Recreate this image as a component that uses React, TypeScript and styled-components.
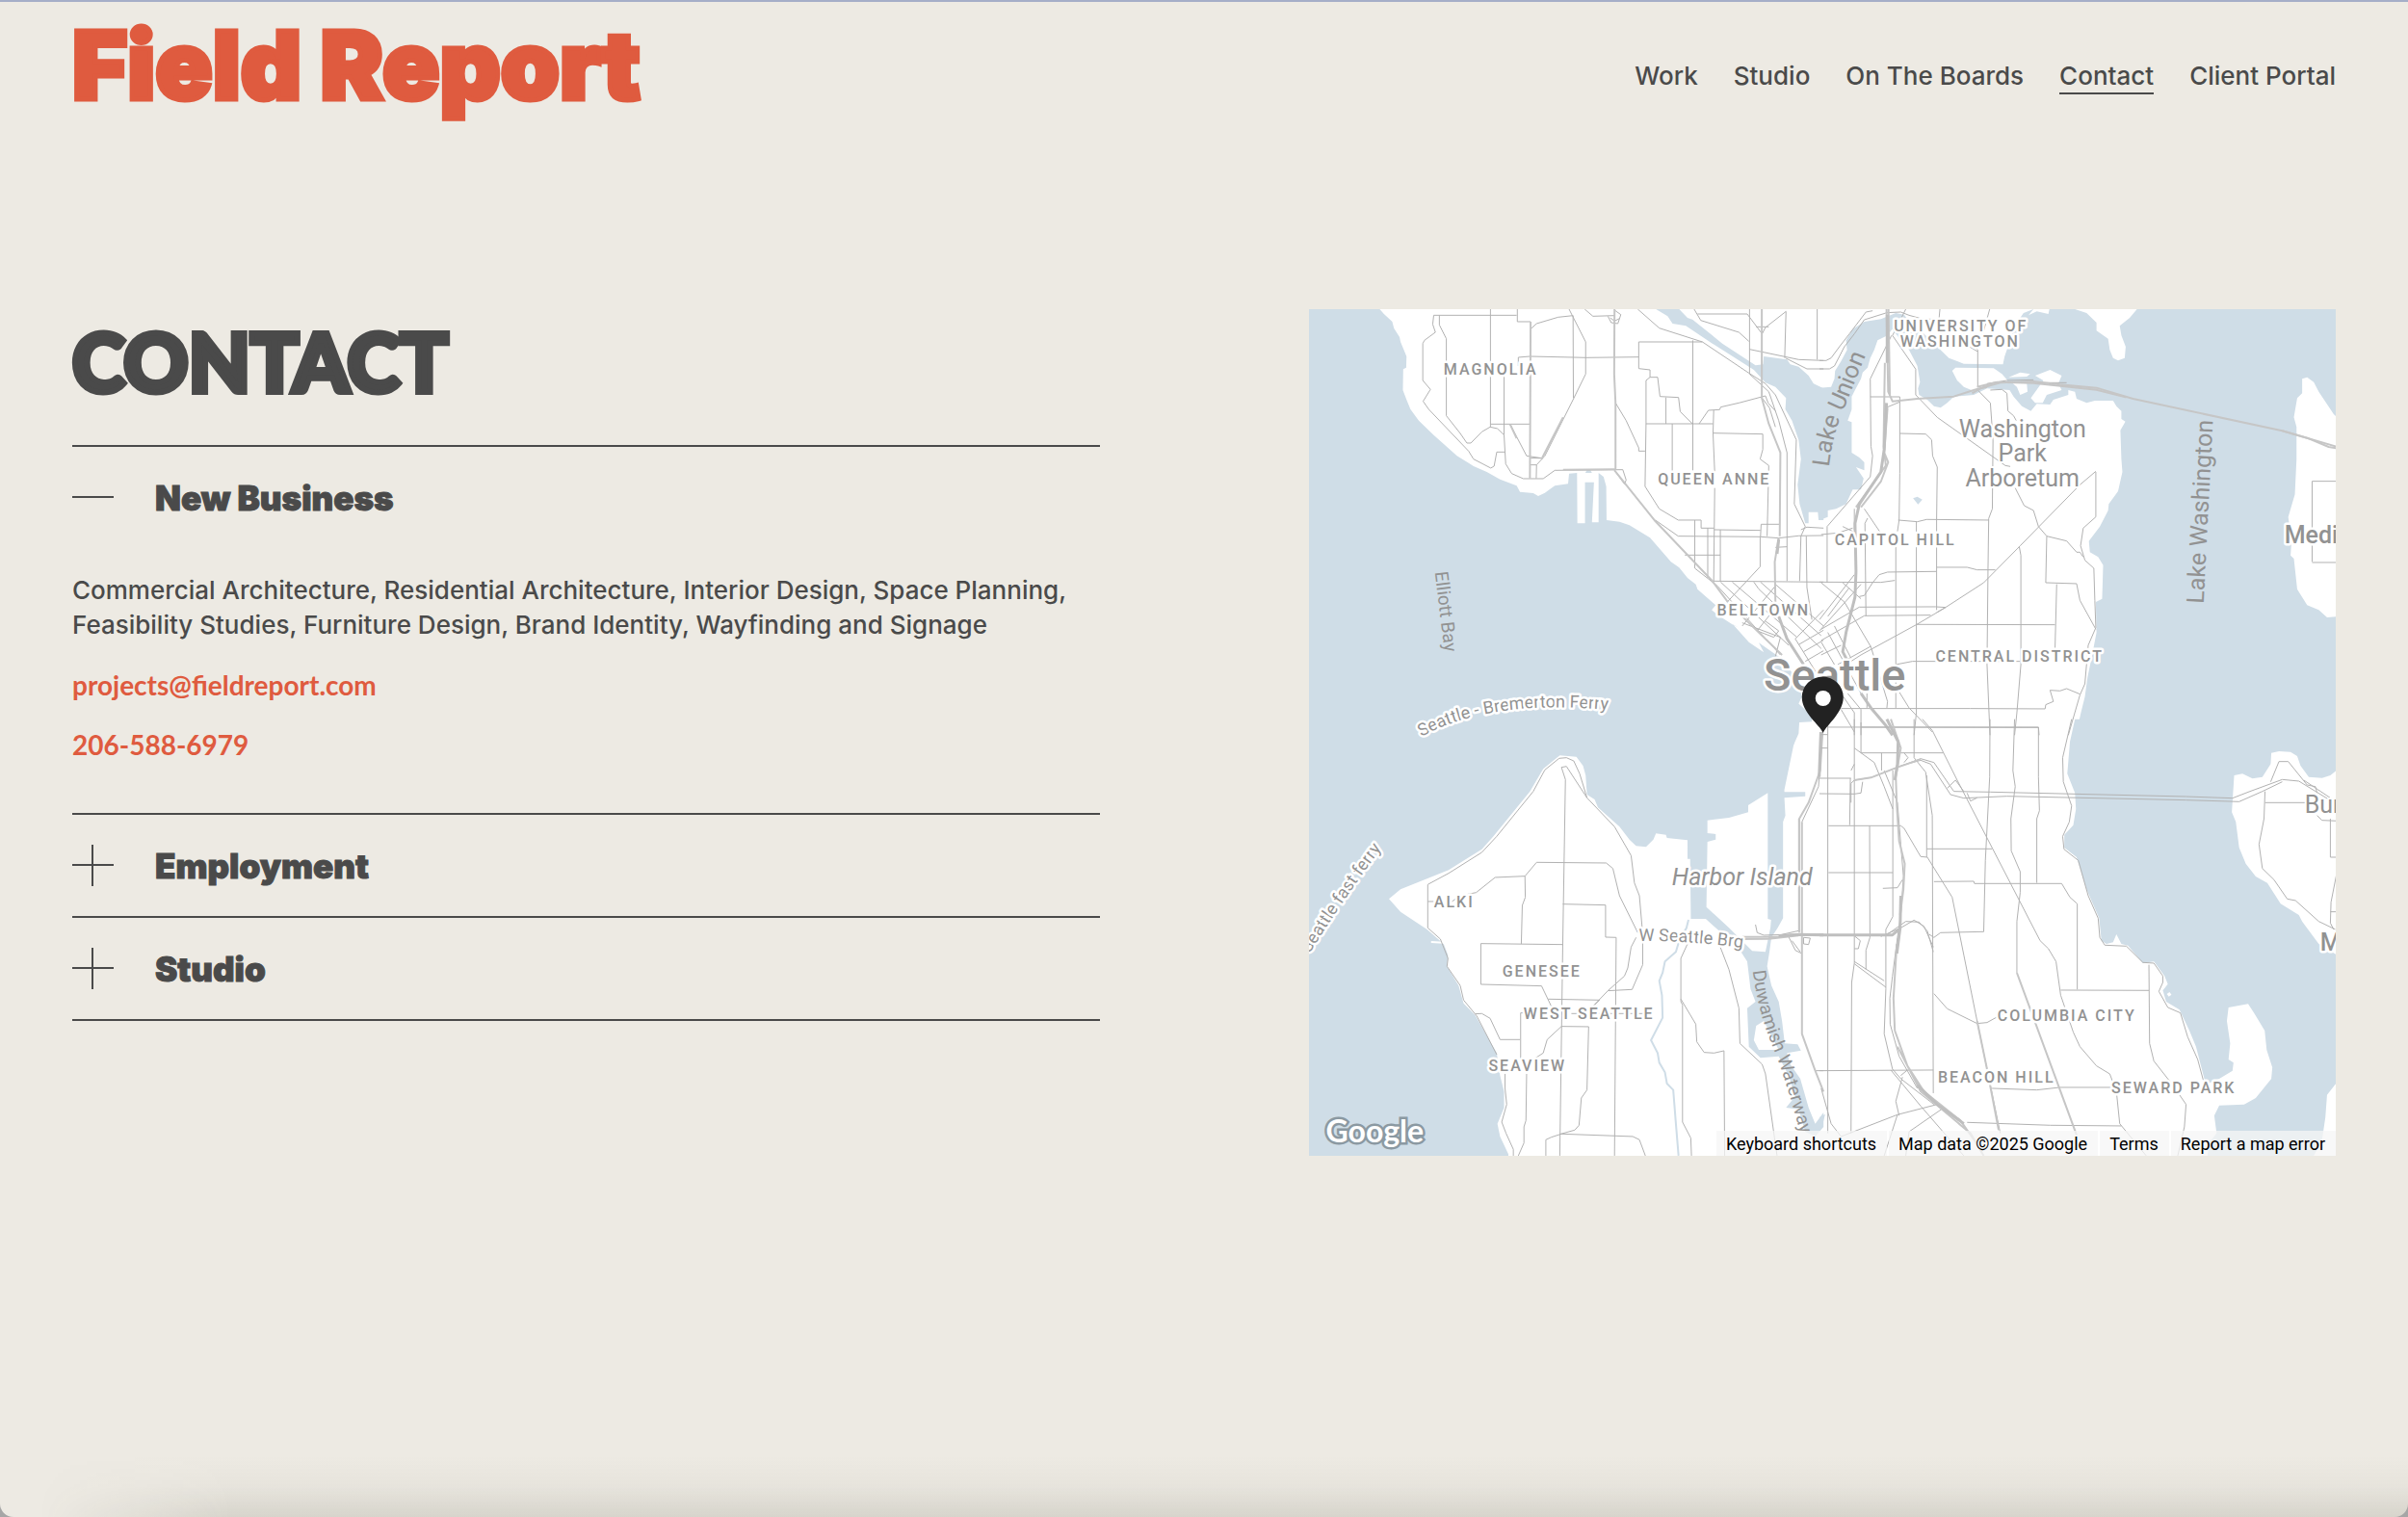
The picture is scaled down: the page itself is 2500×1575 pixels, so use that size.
import React, { useState } from "react";
import styled, { createGlobalStyle } from "styled-components";

const ink = "#4a4a4a";
const accent = "#df5b3f";
const paper = "#edeae3";

const GlobalStyle = createGlobalStyle`
  *, *::before, *::after { box-sizing: border-box; }
  body { margin: 0; background: #a6a6a6; color: ${ink}; font-family: Inter, "Liberation Sans", sans-serif; }
`;

const Page = styled.div`
  position: relative;
  min-height: 100vh;
  overflow: hidden;
  background: ${paper};
  border-top: 2px solid #a5aec8;
  border-radius: 0 0 14px 14px;

  &::after {
    content: "";
    position: absolute;
    inset: auto 0 0 0;
    height: 64px;
    pointer-events: none;
    background: linear-gradient(to top, rgba(60, 60, 40, 0.12), rgba(60, 60, 40, 0.03) 50%, transparent);
    mask-image: linear-gradient(to right, transparent 40px, #000 240px);
  }
`;

const Header = styled.header`
  display: flex;
  justify-content: space-between;
  align-items: flex-start;
  padding: 0 75px;
`;

const Logo = styled.a`
  color: ${accent};
  font: 900 98px/132px Inter, "Liberation Sans", sans-serif;
  -webkit-text-stroke: 5px ${accent};
  text-decoration: none;
  white-space: nowrap;
`;

const Nav = styled.nav`
  display: flex;
  gap: 37px;
  padding-top: 60px;
`;

const NavLink = styled.a<{ $active?: boolean }>`
  border-bottom: 2px solid ${(p) => (p.$active ? ink : "transparent")};
  color: ${ink};
  font-size: 26px;
  font-weight: 500;
  line-height: 34px;
  text-decoration: none;
  white-space: nowrap;
`;

const Main = styled.main`
  display: grid;
  grid-template-columns: minmax(0, 1fr) minmax(0, 1fr);
  gap: 217px;
  align-items: start;
  padding: 187px 75px 120px;
`;

const Title = styled.h1`
  margin: 0 0 33px;
  font: 900 83px/108px Lato, "Liberation Sans", sans-serif;
  -webkit-text-stroke: 6px ${ink};
  text-transform: uppercase;
`;

const Accordion = styled.div`
  border-bottom: 2px solid ${ink};
`;

const Item = styled.section`
  border-top: 2px solid ${ink};
`;

const ItemHeading = styled.h2`
  margin: 0;
`;

const Toggle = styled.button`
  display: flex;
  align-items: center;
  gap: 43px;
  width: 100%;
  height: 105px;
  padding: 0;
  border: 0;
  background: none;
  color: ${ink};
  cursor: pointer;
  text-align: left;
`;

const ToggleLabel = styled.span`
  font: 900 35px/48px Inter, "Liberation Sans", sans-serif;
  -webkit-text-stroke: 1px ${ink};
`;

const Panel = styled.div`
  display: flex;
  flex-direction: column;
  align-items: flex-start;
  gap: 26px;
  padding: 26px 0 53px;
`;

const Copy = styled.p`
  margin: 0;
  font-size: 26px;
  font-weight: 500;
  line-height: 36px;
`;

const ContactLink = styled.a`
  color: ${accent};
  font: 700 28px/36px Lato, "Liberation Sans", sans-serif;
  text-decoration: none;
`;

const MapFrame = styled.section`
  position: relative;
  height: 879px;
  overflow: hidden;
  background: #fff;
`;

const MapCanvas = styled.svg`
  display: block;
  width: 100%;
  height: 100%;
`;

const Water = styled.path`
  fill: #cfdde7;
`;

const Land = styled.path`
  fill: #fff;
`;

const Stream = styled.path`
  fill: none;
  stroke: #cfdde7;
  stroke-width: 2;
  vector-effect: non-scaling-stroke;
`;

const Road = styled.path<{ $w: number }>`
  fill: none;
  stroke: ${(p) => (p.$w === 2 ? "#c6c6c6" : p.$w > 2 ? "#bfbfbf" : "#b2b2b2")};
  stroke-width: ${(p) => p.$w};
  stroke-linejoin: round;
  vector-effect: non-scaling-stroke;
`;

type Kind = "district" | "place" | "town" | "city" | "water" | "ferry" | "island";

const kinds: Record<Kind, string> = {
  district: "font-size: 16px; font-weight: 500; letter-spacing: 2px;",
  place: "font-size: 25px; stroke-width: 4px;",
  town: "font-size: 25px; font-weight: 500;",
  city: "font-size: 47px; font-weight: 500;",
  water: "font-size: 25px; stroke: none;",
  ferry: "font-size: 18px;",
  island: "font-size: 25px; font-style: italic;",
};

const Label = styled.text<{ $kind: Kind; $small?: boolean }>`
  fill: #929292;
  stroke: #fff;
  stroke-width: 5px;
  stroke-linejoin: round;
  paint-order: stroke;
  font-family: Roboto, "Liberation Sans", sans-serif;
  ${(p) => kinds[p.$kind]}
  ${(p) => p.$small && "font-size: 19px;"}
`;

const GoogleLink = styled.a`
  position: absolute;
  left: 18px;
  bottom: 6px;
  color: #fff;
  font: 700 32px/40px Lato, "Liberation Sans", sans-serif;
  -webkit-text-stroke: 5px #8b99a2;
  paint-order: stroke fill;
  text-decoration: none;
`;

const Attribution = styled.div`
  position: absolute;
  right: 0;
  bottom: 0;
  display: flex;
  gap: 2px;
`;

const attributionCell = `
  height: 26px;
  padding: 1px 11px 0 10px;
  border: 0;
  background: rgba(245, 245, 245, 0.75);
  color: #000;
  font: 400 18px/25px Roboto, "Liberation Sans", sans-serif;
  text-decoration: none;
  white-space: nowrap;
`;

const AttributionButton = styled.button`${attributionCell}`;
const AttributionText = styled.span`${attributionCell}`;
const AttributionLink = styled.a`${attributionCell}`;

type Tile = { at: string; water: string[]; land: string[]; streams: string[]; roads: string[]; arterials: string[]; freeways: string[] };

const tiles: Tile[] = [
  {
    at: "translate(-8 -11) scale(0.3444 0.3333)",
    water: [
      "M0,33 237,33 250,48 275,72 280,92 297,120 300,135 318,180 317,215 308,220 307,285 318,315 330,345 355,380 400,425 470,490 520,522 560,540 600,563 650,583 660,602 700,606 715,615 735,605 765,583 805,577 808,545 832,543 833,700 856,700 856,572 883,572 877,697 897,697 897,543 912,555 920,585 921,690 960,695 990,706 1052,745 1115,820 1140,838 1165,870 1190,890 1195,905 1250,955 1238,970 1255,985 1300,1015 1320,1025 1302,1015 1350,1070 1395,1102 1380,1072 1440,1115 1468,1145 1500,1200 1510,1240 1500,1262 1540,1300 1540,1318 1502,1320 1500,1355 1485,1390 0,1390Z",
      "M1070,33 1140,33 1165,60 1180,65 1270,140 1370,208 1393,205 1395,180 1465,190 1475,205 1500,212 1530,240 1545,265 1575,280 1575,690 1560,690 1558,665 1530,665 1530,700 1520,700 1503,640 1497,580 1507,500 1500,440 1480,380 1460,345 1462,310 1430,275 1400,262 1365,222 1240,140 1160,85 1120,78 1105,55Z",
      "M857,543 862,534 872,534 877,543Z",
    ],
    land: [],
    streams: [],
    roads: [
      "M650,52 400,52 397,80 405,105 372,130 367,140 367,255 390,283 368,320 385,345 505,475 520,500 572,528 582,522 590,478 615,478",
      "M417,52 417,82 438,125 438,365 480,420 500,450 512,450 545,415 570,400 592,405 612,425 617,515 635,545 670,561 730,561 765,535 970,533 980,565 975,578 945,535",
      "M571,33 571,400 M612,240 612,425 M652,33 652,72 692,72 M571,391 692,391 M630,391 680,490 725,497 690,497 M692,95 710,78 775,58 820,53 821,310",
      "M808,33 858,135 858,235 820,315 735,490 710,518 709,560 M690,518 710,518 M655,210 655,183 690,180 860,184 1018,182 M855,33 880,55 945,53",
      "M948,325 980,380 1018,465 1018,475 1037,475 M925,55 935,75 955,78 964,50 945,36 M932,60 945,70 960,62",
      "M1015,33 1080,92 1210,135 1350,232 1400,265 1430,300 1493,440 1487,640 1520,710 M1210,135 1018,135 1018,218 1052,222 1052,245 1040,255 1040,390 1037,585 1080,655 1137,690 1206,690 1206,715 1245,715",
      "M1052,245 1075,245 1082,305 1138,308 1143,352 1180,390 M1100,308 1100,390 M1040,390 1242,390 M1181,130 1181,535 M1119,390 1119,540",
      "M1200,390 1228,348 1262,346 1265,338 1320,325 1400,303 1408,325 1430,350 M1244,348 1242,420 1247,540 M1247,590 1244,880 M1242,419 1392,422 1392,470 1384,500 1410,520 1405,740",
      "M1185,33 1205,68 1320,105 1350,133 M1352,33 1352,235 M1195,48 1345,48 1390,110 1400,90 1462,40 1458,185 M1372,88 1410,88 M1352,158 1500,190 1575,193 M1460,185 1525,219 1575,219 M1556,33 1556,190",
      "M1352,235 1410,290 1440,380 1465,480 1465,880 M1390,310 1412,340 1430,400 M1068,690 1137,740 1385,742 1440,746 1500,739 1575,738 M1187,690 1187,840 1255,895 1445,1110 M1157,799 1264,799 M1226,715 1226,870 M1264,720 1264,880 M1245,720 1385,722",
      "M1385,742 1387,703 1443,703 M1384,742 1384,835 1285,945 M1240,880 1575,883 M1520,710 1507,740 1503,880 M1507,720 1525,712 1575,715 M1523,740 1525,900 1540,1000 M1430,775 1465,773",
      "M1265,883 1470,1080 M1300,883 1495,1055 M1365,883 1380,905 1568,1090 M1385,883 1568,1050 M1430,890 1575,1020 M1330,1020 1430,895 M1375,1035 1440,950 M1490,1060 1575,970 M1500,1078 1575,1033 M1515,1100 1575,1064 M1520,1130 1575,1097",
      "M1490,1060 1568,1190 M1330,1010 1445,1055 1430,1115 M1375,1035 1425,1055 1440,1035 1400,1005",
    ],
    arterials: [
      "M692,72 690,560 M945,33 944,235 948,325 948,533 M945,535 1065,690 1240,880 1290,950 1450,1110 M725,500 735,480 790,370 M790,533 945,532 M630,391 650,435",
      "M1389,33 1389,310 1410,390 1445,480 1443,740 M1440,745 1428,820 1430,945",
    ],
    freeways: ["M1440,990 1465,1060 1515,1140 M1440,750 1435,795"],
  },
  {
    at: "translate(532 -11) scale(0.3444 0.3333)",
    water: [
      "M-5,278 30,275 40,250 42,225 60,195 78,160 75,130 95,95 130,72 180,64 225,45 250,50 275,85 240,130 222,105 214,95 200,115 170,130 160,160 148,185 140,215 125,230 120,250 102,285 92,305 92,345 80,380 92,385 92,480 115,495 130,510 130,535 105,525 128,560 120,595 95,595 75,640 45,655 20,660 20,680 -5,690Z",
      "M235,75 300,100 350,150 385,185 430,203 548,205 553,180 580,100 590,85 615,82 600,60 610,45 640,33 1556,33 1556,1360 768,1360 783,1290 795,1240 803,1180 815,1120 830,1040 828,945 847,935 850,830 835,805 810,790 807,755 840,710 865,660 867,640 895,600 908,540 905,500 902,410 917,383 905,375 905,350 890,335 880,318 825,318 800,325 770,312 765,290 745,285 745,300 700,315 690,330 650,328 632,350 605,335 580,305 568,285 500,280 460,300 400,305 380,325 360,340 340,335 320,315 295,300 292,280 298,260 290,210 260,150Z",
      "M277,622 290,617 305,626 292,641Z",
    ],
    land: [
      "M395,225 405,215 520,217 545,235 562,255 550,262 500,268 460,288 430,275 410,255Z",
      "M565,245 600,230 630,235 620,243Z",
      "M632,310 670,255 645,240 690,222 725,240 715,265 725,285 680,300 668,325 645,325Z",
      "M575,262 620,265 622,290 600,300 590,275Z",
      "M765,33 800,45 830,75 830,100 865,125 870,160 880,185 895,193 915,185 918,150 905,115 900,85 930,60 952,33Z",
      "M640,33 688,33 685,48 650,40 625,52Z",
      "M1450,250 1465,245 1485,260 1500,290 1545,360 1560,375 1560,990 1525,993 1500,970 1465,955 1435,905 1425,810 1415,800 1418,755 1408,680 1428,610 1433,500 1433,400 1425,370 1435,310 1450,295Z",
    ],
    streams: [],
    roads: [
      "M155,38 135,42 85,110 55,150 30,185 15,193 -5,193 M195,45 130,66 100,110 70,150 40,210 25,219 -5,219 M195,44 240,42 265,52 300,62 355,66 358,33 M255,33 215,115 285,220 285,300 350,370 555,520 570,523",
      "M212,115 148,250 150,460 155,490 148,555 18,710 18,885 M148,306 237,306 237,545 235,690 230,725 M237,420 315,422 333,440 336,490 350,525 348,690 348,970",
      "M472,160 472,275 M472,165 430,140 M472,285 510,325 518,440 516,655 505,685 503,840 500,1140 506,1290 509,1360 M510,285 545,283 560,295 563,350 580,365 588,380",
      "M585,590 612,645 640,660 655,710 680,740 740,755 770,790 780,790 790,805 M828,540 828,680 790,715 782,770 795,815 822,840 825,940 828,1025 805,1080 795,1200 780,1235 745,1360",
      "M232,690 290,695 318,688 505,690 M287,695 287,1290 280,1360 M130,655 178,728 M225,755 225,1275 M348,837 440,837 470,845 525,845 M348,850 200,852 175,860 155,885 130,925 115,928",
      "M-5,883 180,884 222,878 M597,772 602,800 602,1140 590,1290 583,1360 M680,740 677,885 770,888 780,940 828,1030 M710,890 705,1090 M287,1015 705,1016 M345,960 115,961 0,1030 M330,986 130,988 0,1065",
      "M375,962 345,960 M348,978 375,962 M60,1277 450,1277 675,1278 677,1265 700,1255 690,1220 720,1222 740,1215 780,1232 M225,1140 275,1130 600,1130",
      "M0,885 70,945 150,1085 200,1255 198,1275 M235,1225 265,1275 335,1350 M-5,1000 100,860 M-5,1035 120,890 M20,990 85,900 M65,885 120,935 M0,1070 40,1140 M20,1040 120,1230 M40,1020 90,1120 M50,1140 150,1083 M0,1110 60,1080",
      "M100,655 100,720 M140,684 132,700 135,988 M65,710 95,725 M0,735 50,730 95,715 M1480,820 1480,569 1560,569 M1480,822 1560,822 M395,65 472,160 M508,33 490,100 472,150 M60,1280 100,1350 M80,1230 120,1280 120,1360 M60,1230 100,1290 100,1360 M20,1335 655,1335 657,1360 M138,1230 138,1275",
      "M500,265 560,255 640,253 M650,262 740,262 M195,340 237,322",
      "M375,962 490,885 600,770 780,580 828,538 M375,962 290,1014 120,1110 60,1150",
    ],
    arterials: [
      "M197,33 202,290 215,320 290,312 400,305 460,285 540,262 640,258 720,268 830,278 940,312 1390,412 1556,462",
      "M203,33 207,300 M192,200 188,460 195,520 105,650 M200,340 190,480 202,510 180,570 120,650",
      "M470,275 530,260 640,263 830,284 920,308 M455,295 480,280 500,275 M1390,412 1470,436 1530,462 1556,467",
    ],
    freeways: ["M199,50 199,200 M197,325 190,470 180,540 115,640 102,700 105,850 102,930 75,1040 65,1100 80,1130 M120,1230 150,1275 195,1330 215,1360"],
  },
  {
    at: "translate(-8 429) scale(0.3444 0.3333)",
    water: [
      "M-5,20 1495,20 1457,210 1457,217 1520,217 1520,230 1457,235 1460,290 1453,310 1453,610 1437,640 1418,670 1412,715 1405,760 1418,820 1440,870 1450,930 1458,1000 1497,1003 1507,1022 1465,1030 1475,1065 1505,1110 1530,1200 1550,1250 1575,1215 1575,1260 1550,1290 1520,1275 1500,1205 1462,1200 1490,1165 1470,1100 1440,1040 1385,1045 1350,1010 1345,890 1370,870 1355,830 1345,745 1320,705 1250,640 1220,612 1175,612 1173,425 1165,425 1165,367 1103,360 1100,350 1070,346 1062,365 1040,388 1010,385 990,365 960,325 895,265 885,240 862,225 858,165 850,135 830,107 780,103 730,145 690,215 580,355 545,395 445,460 300,520 265,550 300,590 380,645 430,690 443,725 440,760 475,820 490,875 525,912 590,1030 600,1100 612,1150 612,1200 592,1250 600,1290 625,1345 625,1360 -5,1360Z",
    ],
    land: [
      "M1225,305 1290,297 1348,280 1348,258 1407,220 1407,612 1417,615 1415,640 1400,715 1360,712 1290,640 1222,575 1225,372 1250,365 1250,348 1225,345Z",
      "M1372,945 1395,930 1425,990 1440,1020 1380,1020 1365,990Z",
      "M392,681 430,683 430,689 392,687Z",
    ],
    streams: ["M1168,615 1162,640 1140,680 1130,715 1097,745 1090,780 1080,805 1088,850 1090,920 1055,990 1075,1030 1080,1060 1097,1090 1103,1125 1122,1145 1130,1250 1138,1350"],
    roads: [
      "M382,505 445,470 545,405 590,355 700,215 735,148 778,112 800,110 822,120 840,160 862,235 945,325 995,415 1005,500 1020,540 1030,660 1030,755 998,832 925,836",
      "M382,505 382,640 420,675 443,735 440,760 480,820 490,865 530,915 590,1035 M615,1095 615,1140 620,1190 605,1245 618,1280 640,1330 640,1350",
      "M862,235 800,137 785,140 797,178 789,690 780,1350 M382,558 400,558 M455,558 480,540 528,530 585,483 675,479 710,436 920,438 940,455 960,540 1015,655",
      "M675,479 676,545 667,570 664,690 M789,566 918,569 918,669 950,670 945,1350 M789,692 542,689 542,816 725,821 757,890 M745,862 900,865 880,885",
      "M1010,670 995,700 985,765 975,790 925,836 870,895 M525,908 545,907 570,922 600,988 660,988 M662,1050 662,905 680,905 M700,1050 730,1030 742,988 785,947 867,948 862,1145 845,1170 838,1255 825,1270 780,1283",
      "M680,1095 678,1240 672,1260 672,1310 655,1350 M738,1350 738,1300 755,1292 785,1282 1000,1290 1020,1300 1038,1350 M815,907 1060,907",
      "M1165,690 1145,735 1145,870 1150,880 1150,1245 1175,1295 1177,1350 M1145,862 1190,940 1193,995 1215,1028 1245,1030 1275,1023 1277,1350 M1262,695 1290,770 1320,890 1323,1000 1390,1065 1400,1095 1435,1350",
      "M1370,630 1375,655 1395,663 1500,660 M1470,668 1490,710 1510,720 M1575,-10 1560,200 1510,310 M1500,300 1500,650 M1515,690 1515,670 1535,672 1530,692 1515,690 M1550,1085 1575,1085 M1440,663 1505,648 M1480,680 1505,715",
    ],
    arterials: ["M1572,30 1565,150 1530,250 1502,300 1502,655 M1510,310 1510,970 1550,1085 1575,1150 M1330,668 1440,668 1500,660 1575,660 M1330,675 1410,674 1500,664"],
    freeways: ["M1440,665 1500,661 1575,662 M1567,30 1562,170"],
  },
  {
    at: "translate(532 429) scale(0.3444 0.3333)",
    water: [
      "M765,-10 750,60 742,160 765,220 768,270 760,320 733,350 733,390 770,420 800,520 838,610 845,680 860,690 880,685 890,660 905,690 925,695 970,750 1003,745 1035,790 1045,815 1030,835 1040,870 1080,895 1110,960 1130,1010 1155,1110 1165,1125 1200,1110 1240,1085 1243,1060 1228,1050 1233,1000 1223,930 1228,888 1287,877 1305,905 1337,960 1343,1020 1360,1075 1357,1110 1310,1170 1275,1190 1200,1193 1185,1225 1192,1280 1170,1310 1163,1360 1480,1360 1510,1300 1520,1230 1525,1160 1556,1120 1556,725 1500,690 1450,620 1440,600 1385,565 1345,500 1310,480 1280,440 1260,390 1250,310 1238,280 1245,165 1270,160 1300,175 1330,170 1355,130 1357,95 1380,90 1415,92 1435,105 1445,135 1470,170 1510,173 1535,165 1556,148 1556,-10Z",
      "M-5,1230 12,1220 5,1250 -5,1270Z",
    ],
    land: ["M1042,846 1050,840 1056,848 1048,854Z"],
    streams: [],
    roads: [
      "M-5,174 90,174 M-5,222 100,223 120,220 125,185 M20,-10 20,1280 M100,-10 100,750 92,810 90,1280 M120,0 120,95 368,95 M182,95 182,150 M22,322 240,322 250,330 300,418 320,420 395,545 470,930 540,1280",
      "M22,468 216,468 M146,322 147,670 135,710 135,770 M88,174 86,320 M216,150 216,605 195,645 195,830 M186,517 230,515 245,490 M-5,1085 338,1083 M0,38 20,38 M0,80 20,80",
      "M280,-10 280,110 315,155 335,290 338,1155 M318,165 318,420 M318,394 515,394 M340,496 460,495 462,502 725,502 750,545 772,565 772,832 M325,660 340,670 360,655 490,652 495,430 508,170 509,-10",
      "M305,-10 335,25 410,180 660,680 685,705 708,745 722,850 760,965 780,1010 830,1070 870,1095 890,1150 900,1250 980,1350 M583,-10 578,150 585,200 572,300 573,400 600,465 600,530 590,620 590,780",
      "M120,15 655,16 655,170 658,275 650,300 650,500 M755,-10 728,110 730,185 755,260 748,310 728,355 732,395 775,430 805,540 835,610 840,670 855,694 920,697 970,748 1003,750 1030,790 1030,810 1018,838 1045,888 1083,905 1105,980 1135,1050 1152,1115",
      "M722,834 988,835 M988,755 990,1000 1003,1055 1060,1130 1100,1190 1095,1260 1075,1350 M340,845 380,892 470,938 500,935 540,912 580,893 M515,1140 650,1145 720,1137 880,1137 M440,1246 690,1255 905,1257",
      "M0,1140 30,1250 60,1290 230,1222 350,1190 M230,1222 190,1350 M210,1083 300,1195 430,1350 M370,1200 265,1275 255,1350 M100,80 160,125 190,200 216,270 M90,250 90,190 100,180 M90,150 100,130",
      "M1338,250 1465,250 M1338,215 1335,300 1320,380 1330,455 1365,490 1405,550 1430,555 1500,620 1550,645 M1355,185 1380,122 1408,122 1465,195 1490,200 1495,220 M1535,300 1535,420 1556,420 M1535,590 1556,590 M1556,460 1537,560 1535,625 1545,645 M1495,290 1510,305 1556,307",
      "M100,665 118,680 112,705 100,705 M100,752 195,825 M100,745 190,805 M250,95 262,110 250,125 M380,205 405,180 430,215 M440,220 450,245 470,235",
      "M195,830 190,970 215,1080 240,1110 340,1190 M245,1105 225,1180 235,1225 M240,1100 260,1083",
      "M100,180 150,172 230,140 300,113 340,125 400,215 510,217 1100,231 1240,236 1290,216 1390,178 1440,183 1530,240",
      "M240,135 300,118 330,130 390,225 430,236 560,230 1100,242 1260,247 1330,215 1390,185 M1455,180 1556,250",
      "M190,150 230,250 240,380 248,480 240,600 230,670 215,790 207,860 208,940 235,1040 290,1140 M338,700 310,635 280,616 240,640 180,667 M338,715 320,650 295,622 255,620 200,660",
    ],
    arterials: [
      "M590,780 770,1285 M100,180 150,172 230,140 300,115",
      "M228,690 218,860 222,960 260,1070 310,1150 420,1240 460,1300 M230,1010 300,1150 450,1280 490,1350",
      "M470,930 500,1080 535,1270",
      "M210,-10 240,80 225,170 228,260 235,370 252,440 248,520 238,600",
    ],
    freeways: ["M198,-10 232,60 230,130 222,180 M-5,662 215,662 240,640 M240,540 238,640 228,720 M290,1130 350,1190 430,1250"],
  },
];

const districts: [string, number, number][] = [
  ["MAGNOLIA", 189, 68],
  ["QUEEN ANNE", 421, 182],
  ["BELLTOWN", 472, 318],
  ["UNIVERSITY OF", 677, 23],
  ["WASHINGTON", 676, 39],
  ["CAPITOL HILL", 609, 245],
  ["CENTRAL DISTRICT", 738, 366],
  ["ALKI", 151, 621],
  ["GENESEE", 242, 693],
  ["WEST SEATTLE", 291, 737],
  ["SEAVIEW", 227, 791],
  ["COLUMBIA CITY", 787, 739],
  ["BEACON HILL", 714, 803],
  ["SEWARD PARK", 898, 814],
];

const curved: { id: string; d: string; text: string; kind: Kind; small?: boolean }[] = [
  { id: "bay", d: "M131 273 L144 380", text: "Elliott Bay", kind: "water", small: true },
  { id: "bremerton", d: "M117 444 Q190 403 320 417", text: "Seattle - Bremerton Ferry", kind: "ferry" },
  { id: "fast", d: "M-4 677 Q38 608 92 538", text: "- Seattle fast ferry", kind: "ferry" },
  { id: "union", d: "M540 164 Q544 128 558 98 Q568 72 580 44", text: "Lake Union", kind: "water" },
  { id: "washington", d: "M929 306 L939 110", text: "Lake Washington", kind: "water" },
  { id: "bridge", d: "M343 656 Q400 655 470 666", text: "W Seattle Brg", kind: "ferry" },
  { id: "duwamish", d: "M461 687 Q466 728 481 764 Q497 803 514 870", text: "Duwamish Waterway", kind: "water", small: true },
];

function SeattleMap() {
  return (
    <MapCanvas viewBox="0 0 1067 879" preserveAspectRatio="xMidYMid slice" role="img" aria-label="Map of Seattle">
      {tiles.map((tile) => (
        <g key={tile.at} transform={tile.at}>
          {tile.water.map((d) => <Water key={d} d={d} />)}
          {tile.land.map((d) => <Land key={d} d={d} />)}
          {tile.streams.map((d) => <Stream key={d} d={d} />)}
        </g>
      ))}
      {tiles.map((tile) => (
        <g key={tile.at} transform={tile.at}>
          {tile.roads.map((d) => <Road key={d} d={d} $w={1} />)}
          {tile.arterials.map((d) => <Road key={d} d={d} $w={2} />)}
          {tile.freeways.map((d) => <Road key={d} d={d} $w={3} />)}
        </g>
      ))}
      {curved.map((c) => (
        <React.Fragment key={c.id}>
          <path id={c.id} d={c.d} fill="none" />
          <Label $kind={c.kind} $small={c.small}>
            <textPath href={`#${c.id}`}>{c.text}</textPath>
          </Label>
        </React.Fragment>
      ))}
      {districts.map(([name, x, y]) => (
        <Label key={name} $kind="district" x={x} y={y} textAnchor="middle">{name}</Label>
      ))}
      <Label $kind="place" textAnchor="middle">
        <tspan x="741" y="133">Washington</tspan>
        <tspan x="741" y="158">Park</tspan>
        <tspan x="741" y="184">Arboretum</tspan>
      </Label>
      <Label $kind="town" x="1013" y="243">Medi</Label>
      <Label $kind="place" x="1034" y="523">Bur</Label>
      <Label $kind="town" x="1050" y="666">M</Label>
      <Label $kind="island" x="450" y="598" textAnchor="middle">Harbor Island</Label>
      <Label $kind="city" x="546" y="396" textAnchor="middle">Seattle</Label>
      <path
        d="M534 440 C530 431 512 419 512 403 A21 21 0 0 1 555 403 C555 419 538 431 534 440 Z"
        fill="#222"
      />
      <circle cx="534" cy="404" r="8" fill="#fff" />
    </MapCanvas>
  );
}

function ToggleIcon({ open }: { open: boolean }) {
  return (
    <svg width="43" height="43" viewBox="0 0 43 43" fill="none" stroke={ink} strokeWidth="2" aria-hidden="true">
      <path d={open ? "M0 21H43" : "M0 21H43M21 0V43"} shapeRendering="crispEdges" />
    </svg>
  );
}

const navItems = ["Work", "Studio", "On The Boards", "Contact", "Client Portal"];

const sections = [
  {
    title: "New Business",
    copy: "Commercial Architecture, Residential Architecture, Interior Design, Space Planning, Feasibility Studies, Furniture Design, Brand Identity, Wayfinding and Signage",
    email: "projects@fieldreport.com",
    phone: "206-588-6979",
  },
  { title: "Employment" },
  { title: "Studio" },
];

export default function App() {
  const [open, setOpen] = useState("New Business");
  return (
    <>
      <GlobalStyle />
      <Page>
        <Header>
          <Logo href="#home">Field Report</Logo>
          <Nav aria-label="Main">
            {navItems.map((item) => (
              <NavLink key={item} href={`#${item}`} $active={item === "Contact"}>{item}</NavLink>
            ))}
          </Nav>
        </Header>
        <Main>
          <div>
            <Title>Contact</Title>
            <Accordion>
              {sections.map((s) => (
                <Item key={s.title}>
                  <ItemHeading>
                    <Toggle
                      type="button"
                      aria-expanded={open === s.title}
                      onClick={() => setOpen(open === s.title ? "" : s.title)}
                    >
                      <ToggleIcon open={open === s.title} />
                      <ToggleLabel>{s.title}</ToggleLabel>
                    </Toggle>
                  </ItemHeading>
                  {open === s.title && s.copy && (
                    <Panel>
                      <Copy>{s.copy}</Copy>
                      <ContactLink href={`mailto:${s.email}`}>{s.email}</ContactLink>
                      <ContactLink href={`tel:${s.phone}`}>{s.phone}</ContactLink>
                    </Panel>
                  )}
                </Item>
              ))}
            </Accordion>
          </div>
          <MapFrame>
            <SeattleMap />
            <GoogleLink href="#google">Google</GoogleLink>
            <Attribution>
              <AttributionButton type="button">Keyboard shortcuts</AttributionButton>
              <AttributionText>Map data ©2025 Google</AttributionText>
              <AttributionLink href="#terms">Terms</AttributionLink>
              <AttributionLink href="#report">Report a map error</AttributionLink>
            </Attribution>
          </MapFrame>
        </Main>
      </Page>
    </>
  );
}
